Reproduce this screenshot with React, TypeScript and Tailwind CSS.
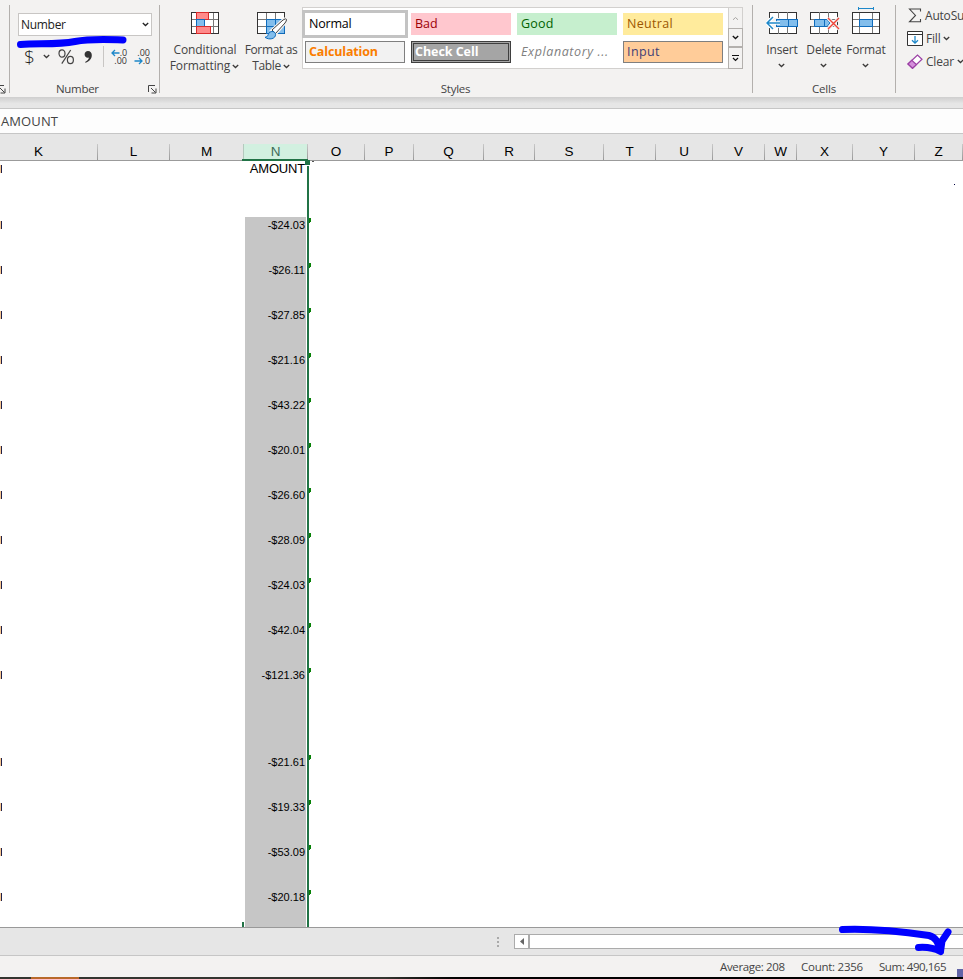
import React from "react";

const UI = "font-['Open_Sans','Noto_Sans',sans-serif]";
const ARIAL = "font-['Liberation_Sans',Arial,sans-serif]";

function Chevron({ className = "", color = "#3b3a39" }: { className?: string; color?: string }) {
  return (
    <svg width="7" height="5" viewBox="0 0 7 5" className={"shrink-0 " + className}>
      <path d="M0.8 1 L3.5 3.5 L6.2 1" fill="none" stroke={color} strokeWidth="1.3" />
    </svg>
  );
}

function Launcher() {
  return (
    <svg width="9" height="9" viewBox="0 0 9 9" className="shrink-0">
      <path d="M0.5 7 V0.5 H7 M3 3 L7.5 7.5 M8 3.5 V8 H3.5" fill="none" stroke="#444" />
    </svg>
  );
}

function Separator() {
  return <div className="mt-[5px] h-[88px] w-px shrink-0 bg-[#b3b0ad]" />;
}

function ArrowLeft() {
  return (
    <svg width="9" height="8" viewBox="0 0 9 8" className="shrink-0">
      <path d="M8.5 4 H1.2 M4 1 L1 4 L4 7" fill="none" stroke="#1e88c9" strokeWidth="1.3" />
    </svg>
  );
}

function ArrowRight() {
  return (
    <svg width="9" height="8" viewBox="0 0 9 8" className="shrink-0">
      <path d="M0.5 4 H7.8 M5 1 L8 4 L5 7" fill="none" stroke="#1e88c9" strokeWidth="1.3" />
    </svg>
  );
}

function NumberGroup() {
  return (
    <div className="flex h-full w-[149px] shrink-0 flex-col pt-[13px]">
      <div className="ml-2 flex h-[23px] w-[134px] items-center justify-between border border-[#c8c6c4] bg-white pl-[2px] pr-[2px]">
        <span className="pt-px text-[12px] leading-4 tracking-[-0.3px] text-[#222]">Number</span>
        <Chevron color="#222" />
      </div>
      <div className="mt-[10px] flex h-[21px] items-center">
        <span className="ml-[14px] w-[10px] text-[19px] font-light leading-5 text-[#222]">$</span>
        <Chevron className="ml-[9px]" />
        <svg width="17" height="16" viewBox="0 0 17 16" className="ml-[8px]">
          <g fill="none" stroke="#444" strokeWidth="1.2">
            <ellipse cx="4" cy="4.5" rx="3" ry="3.6" />
            <ellipse cx="12.4" cy="11" rx="3" ry="3.6" />
            <path d="M12.7 1 L3.8 14.6" />
          </g>
        </svg>
        <svg width="9" height="14" viewBox="0 0 9 14" className="ml-[9px]">
          <path d="M4 1 C6.4 1 7.8 2.7 7.8 5.1 C7.8 9 5.5 11.5 1.5 12.8 L1.1 12 C3.4 10.9 4.7 9.5 5 7.6 C2.6 8.4 0.6 6.8 0.6 4.5 C0.6 2.5 2.1 1 4 1 Z" fill="#333" />
        </svg>
        <div className="ml-[10px] h-[21px] w-px bg-[#c8c6c4]" />
        <div className="ml-[6px] flex w-[17px] flex-col items-end text-[9px] leading-[8px] text-[#333]">
          <div className="flex h-[8px] items-center"><ArrowLeft /><span className="tracking-[-0.1px]">.0</span></div>
          <div className="h-[8px]">.00</div>
        </div>
        <div className="ml-[6px] flex w-[17px] flex-col items-end text-[9px] leading-[8px] text-[#333]">
          <div className="h-[8px]">.00</div>
          <div className="flex h-[8px] items-center"><ArrowRight /><span className="tracking-[-0.1px]">.0</span></div>
        </div>
      </div>
      <div className="mt-[14px] flex h-4 items-center pl-[46px]">
        <span className="w-[83px] text-[11.5px] leading-4 tracking-[-0.3px]">Number</span>
        <div className="ml-[9px]"><Launcher /></div>
      </div>
    </div>
  );
}

function ConditionalIcon() {
  return (
    <svg width="28" height="22" viewBox="0 0 28 22">
      <rect x="0.5" y="0.5" width="27" height="21" fill="#fff" />
      <path d="M5.5 0 V22 M22.5 0 V22 M0 7.5 H28 M0 14.5 H28" stroke="#777" fill="none" />
      <rect x="0.5" y="0.5" width="27" height="21" fill="none" stroke="#333" />
      <rect x="5.5" y="0.5" width="12" height="7" fill="#ff8a8a" stroke="#d92c2c" />
      <rect x="5.5" y="7.5" width="8" height="7" fill="#83beec" stroke="#0f6cbd" />
      <rect x="5.5" y="14.5" width="14" height="7" fill="#ff8a8a" stroke="#d92c2c" />
    </svg>
  );
}

function TableIcon() {
  return (
    <svg width="31" height="28" viewBox="0 0 31 28">
      <rect x="0.5" y="0.5" width="27" height="21" fill="#fff" />
      <rect x="9.5" y="7.5" width="18" height="14" fill="#83beec" />
      <path d="M9.5 0 V8 M18.5 0 V8 M0 7.5 H9 M0 14.5 H9" stroke="#777" fill="none" />
      <rect x="0.5" y="0.5" width="27" height="21" fill="none" stroke="#333" />
      <path d="M9.5 22 V7.5 H28 M18.5 7.5 V21.5 M9.5 14.5 H27.5 M9.5 21.5 H27.5 V7.5" stroke="#0f6cbd" fill="none" />
      <path d="M14.5 18.5 L26 8 Q29 5.8 29.5 7.4 Q29.7 8.8 28 11 L18.5 22 Z" fill="#fff" stroke="#f3f2f1" strokeWidth="3" />
      <path d="M15 18 L26 8 Q29 6 29.5 7.4 Q29.7 8.8 28 11 L18.5 21.5 Z" fill="#fff" stroke="#444" />
      <path d="M8 25.3 C11 25 10.7 23 12 21 C14 18.5 18.4 19.3 18.6 22.3 C18.7 27 12 28.3 8 25.3 Z" fill="#83beec" stroke="#0f6cbd" />
    </svg>
  );
}

function StyleGallery() {
  return (
    <div className="mt-[7px] flex h-[62px] w-[441px] shrink-0">
      <div className="flex w-[426px] flex-col border border-r-0 border-[#d2d0ce] bg-white pt-[2px] text-[12.5px]">
        <div className="flex h-[28px] items-center">
          <div className="-ml-px flex h-[28px] w-[106px] items-center border-[3px] border-[#c3c3c3] bg-white pl-[4px] tracking-[-0.2px] text-black">Normal</div>
          <div className="ml-[3px] flex h-[22px] w-[100px] items-center bg-[#ffc7ce] pl-[4px] text-[#9c0006]">Bad</div>
          <div className="ml-[6px] flex h-[22px] w-[100px] items-center bg-[#c6efce] pl-[4px] tracking-[0.2px] text-[#006100]">Good</div>
          <div className="ml-[6px] flex h-[22px] w-[100px] items-center bg-[#ffeb9c] pl-[4px] tracking-[0.3px] text-[#9c5700]">Neutral</div>
        </div>
        <div className="mt-[3px] flex h-[22px] items-center pl-[2px]">
          <div className="flex h-[22px] w-[100px] items-center border border-[#7f7f7f] bg-[#f2f2f2] pl-[3px] font-bold tracking-[-0.15px] text-[#fa7d00]">Calculation</div>
          <div className="ml-[6px] flex h-[22px] w-[100px] border border-[#3f3f3f] bg-[#a5a5a5] p-px">
            <div className="flex flex-1 items-center border border-[#3f3f3f] pl-[1px] font-bold leading-4 tracking-[-0.05px] text-white">Check Cell</div>
          </div>
          <div className="ml-[6px] flex h-[22px] w-[100px] items-center whitespace-nowrap pl-[4px] italic tracking-[0.6px] text-[#7f7f7f]">Explanatory ...</div>
          <div className="ml-[6px] flex h-[22px] w-[100px] items-center border border-[#7f7f7f] bg-[#ffcc99] pl-[3px] tracking-[0.4px] text-[#3f3f76]">Input</div>
        </div>
      </div>
      <div className="flex w-[15px] flex-col">
        <div className="flex h-[21px] items-center justify-center border border-b-0 border-[#d2d0ce]">
          <svg width="7" height="5" viewBox="0 0 7 5"><path d="M1 3.8 L3.5 1.5 L6 3.8" fill="none" stroke="#a8a6a4" /></svg>
        </div>
        <div className="flex h-[19px] items-center justify-center border border-[#b3b0ad]"><Chevron color="#111" /></div>
        <div className="flex h-[22px] items-center justify-center border border-[#b3b0ad]">
          <svg width="7" height="8" viewBox="0 0 7 8"><path d="M0 1.5 H7 M1 4 L3.5 6.5 L6 4" fill="none" stroke="#111" strokeWidth="1.2" /></svg>
        </div>
      </div>
    </div>
  );
}

function StylesGroup() {
  return (
    <div className="flex h-full w-[592px] shrink-0 flex-col">
      <div className="flex h-[81px]">
        <div className="flex w-[83px] flex-col items-center pl-[7px] pt-[12px]">
          <ConditionalIcon />
          <span className="mt-[8px] text-[12px] leading-4 tracking-[-0.1px]">Conditional</span>
          <span className="-ml-px flex items-center gap-[2px] whitespace-nowrap text-[12px] leading-4 tracking-[-0.1px]">Formatting <Chevron /></span>
        </div>
        <div className="flex w-[59px] flex-col items-center pr-[3px] pt-[12px]">
          <div className="ml-[2px] h-[22px]"><TableIcon /></div>
          <span className="mt-[8px] whitespace-nowrap text-[12px] leading-4 tracking-[-0.35px]">Format as</span>
          <span className="flex items-center gap-[2px] text-[12px] leading-4 tracking-[-0.35px]">Table <Chevron /></span>
        </div>
        <StyleGallery />
      </div>
      <div className="pr-px text-center text-[11.5px] leading-4 tracking-[-0.25px]">Styles</div>
    </div>
  );
}

function InsertIcon() {
  return (
    <svg width="33" height="22" viewBox="0 0 33 22">
      <rect x="3.5" y="0.5" width="27" height="21" fill="#fff" stroke="#333" />
      <path d="M12.5 0 V22 M21.5 0 V22" stroke="#777" />
      <rect x="0" y="6" width="14" height="10" fill="#f3f2f1" />
      <rect x="10.5" y="7.5" width="21" height="7" fill="#83beec" stroke="#0f6cbd" />
      <path d="M22.5 7 V15" stroke="#0f6cbd" />
      <path d="M14 11 H1.5 M7 5 L1 11 L7 17" fill="none" stroke="#fff" strokeWidth="3.5" />
      <path d="M14 11 H1.5 M7 5 L1 11 L7 17" fill="none" stroke="#1e88c9" strokeWidth="1.5" />
    </svg>
  );
}

function DeleteIcon() {
  return (
    <svg width="30" height="22" viewBox="0 0 30 22">
      <rect x="0.5" y="0.5" width="27" height="21" fill="#fff" stroke="#333" />
      <path d="M9.5 0 V7 M18.5 0 V7 M9.5 15 V22 M18.5 15 V22 M1 7.5 H27 M1 14.5 H27" stroke="#777" />
      <rect x="0" y="8" width="4" height="6" fill="#f3f2f1" />
      <path d="M4.5 7.5 H17 L20 11 L17 14.5 H4.5 Z" fill="#83beec" stroke="#0f6cbd" />
      <path d="M14.5 7 V15" stroke="#0f6cbd" />
      <path d="M18 6 L29 17 M29 6 L18 17" stroke="#f3f2f1" strokeWidth="3.5" />
      <path d="M18 6 L29 17 M29 6 L18 17" stroke="#f04438" strokeWidth="1.4" />
    </svg>
  );
}

function FormatIcon() {
  return (
    <svg width="28" height="27" viewBox="0 0 28 27">
      <path d="M6.5 0 V3 M21.5 0 V3 M6.5 1.5 H21.5" stroke="#1e88c9" fill="none" />
      <rect x="0.5" y="5.5" width="27" height="21" fill="#fff" />
      <path d="M7.5 5 V27 M20.5 5 V27 M0 12.5 H28 M0 19.5 H28" stroke="#777" />
      <rect x="0.5" y="5.5" width="27" height="21" fill="none" stroke="#333" />
      <rect x="7.5" y="12.5" width="13" height="7" fill="#83beec" stroke="#0f6cbd" />
    </svg>
  );
}

function BigButton({ label, children }: { label: string; children: React.ReactNode }) {
  return (
    <div className="flex w-[42px] flex-col items-center">
      <div className="flex h-[34px] items-end justify-center pl-[2px]">{children}</div>
      <span className="mt-[8px] pl-[2px] text-[12px] leading-4 tracking-[-0.15px]">{label}</span>
      <Chevron className="mt-[5px]" />
    </div>
  );
}

function CellsGroup() {
  return (
    <div className="flex h-full w-[142px] shrink-0 flex-col">
      <div className="flex h-[81px] pl-[7px]">
        <BigButton label="Insert"><InsertIcon /></BigButton>
        <BigButton label="Delete"><div className="ml-[1px]"><DeleteIcon /></div></BigButton>
        <BigButton label="Format"><FormatIcon /></BigButton>
      </div>
      <div className="text-center text-[11.5px] leading-4 tracking-[-0.2px]">Cells</div>
    </div>
  );
}

function EditingGroup() {
  return (
    <div className="flex h-full min-w-0 flex-1 flex-col overflow-hidden whitespace-nowrap pl-[11px] pt-[4px] text-[12px] tracking-[-0.2px]">
      <div className="flex h-[23px] items-center">
        <svg width="14" height="15" viewBox="0 0 14 15" className="ml-[1px] shrink-0"><path d="M12.5 3.5 V1 H1.5 L7.5 7.5 L1.5 13.8 H12.5 V11" fill="none" stroke="#444" strokeWidth="1.1" /></svg>
        <span className="ml-[3px]">AutoSum</span>
      </div>
      <div className="flex h-[23px] items-center">
        <svg width="16" height="15" viewBox="0 0 16 15" className="shrink-0"><path d="M0.5 0.5 H15.5 V14.5 H0.5 Z M0.5 3.5 H15.5" fill="#fff" stroke="#333" /><path d="M8 5 V12 M5 9.2 L8 12.2 L11 9.2" fill="none" stroke="#1e88c9" strokeWidth="1.3" /></svg>
        <span className="ml-[3px]">Fill</span><Chevron className="ml-[3px]" />
      </div>
      <div className="flex h-[23px] items-center">
        <svg width="16" height="15" viewBox="0 0 16 15" className="shrink-0"><path d="M1 10 L10.5 1 L15 5.3 L5.5 14.3 Z" fill="#fff" stroke="#9b3fa5" strokeWidth="1.2" /><path d="M1 10 L4.8 6.4 L9.4 10.6 L5.5 14.3 Z" fill="#d48fdb" stroke="#9b3fa5" strokeWidth="1.2" /></svg>
        <span className="ml-[3px]">Clear</span><Chevron className="ml-[3px]" />
      </div>
    </div>
  );
}

function Ribbon() {
  return (
    <div className="flex h-[97px] shrink-0 bg-[#f3f2f1] text-[#444]">
      <div className="flex w-[9px] shrink-0 items-end overflow-hidden pb-[3px]">
        <div className="-ml-[3px]"><Launcher /></div>
      </div>
      <Separator />
      <NumberGroup />
      <Separator />
      <StylesGroup />
      <Separator />
      <CellsGroup />
      <Separator />
      <EditingGroup />
    </div>
  );
}

const headers: [string, string][] = [
  ["K", "w-[98px]"], ["L", "w-[72px]"], ["M", "w-[74px]"], ["N", "w-[64px]"], ["O", "w-[57px]"],
  ["P", "w-[49px]"], ["Q", "w-[70px]"], ["R", "w-[51px]"], ["S", "w-[69px]"], ["T", "w-[52px]"],
  ["U", "w-[57px]"], ["V", "w-[52px]"], ["W", "w-[32px]"], ["X", "w-[56px]"], ["Y", "w-[62px]"], ["Z", "w-[48px]"],
];

function ColumnHeaders() {
  return (
    <div className="flex h-[27px] shrink-0 items-end overflow-hidden border-b border-[#9b9b9b] bg-[#e6e6e6]">
      {headers.map(([name, width]) => (
        <div
          key={name}
          className={
            "flex h-[16px] shrink-0 items-center justify-center text-[13.5px] leading-4 " + ARIAL + " " + width + " " +
            (name === "N" ? "bg-[#d2f0e0] text-[#3d6b58]" : "text-black")
          }
        >
          <span className={"flex-1 text-center " + (name === "K" ? "pr-[20px]" : "")}>{name}</span>
          <span className={"h-full w-px " + (name === "M" ? "bg-[#b5c9be]" : "bg-gradient-to-b from-[#c8c8c8] to-[#999]")} />
        </div>
      ))}
    </div>
  );
}

const rows: [string, string][] = [
  ["-$24.03", "h-[45px]"], ["-$26.11", "h-[45px]"], ["-$27.85", "h-[45px]"], ["-$21.16", "h-[45px]"],
  ["-$43.22", "h-[45px]"], ["-$20.01", "h-[45px]"], ["-$26.60", "h-[45px]"], ["-$28.09", "h-[45px]"],
  ["-$24.03", "h-[45px]"], ["-$42.04", "h-[45px]"], ["-$121.36", "h-[87px]"], ["-$21.61", "h-[45px]"],
  ["-$19.33", "h-[45px]"], ["-$53.09", "h-[45px]"], ["-$20.18", "h-[38px]"],
];

function Stub() {
  return (
    <div className="mt-[4px] flex h-[8px] w-[2px]">
      <div className="w-px bg-[#f6c690]" />
      <div className="w-px bg-[#202048]" />
    </div>
  );
}

function Sheet() {
  return (
    <div className={"relative flex h-[766px] shrink-0 flex-col overflow-hidden bg-white text-black " + ARIAL}>
      <div className="flex h-[56px] shrink-0">
        <div className="w-[245px]"><Stub /></div>
        <div className="w-[60px] text-right text-[13px] leading-4 tracking-[-0.2px]">AMOUNT</div>
        <div className="ml-[2px] mt-[5px] h-[51px] w-[2px] bg-[#217346]" />
        <div className="ml-[645px] mt-[23px] size-px bg-[#000040]" />
      </div>
      {rows.map(([value, height], i) => (
        <div key={i} className={"flex shrink-0 " + height}>
          <div className="w-[245px]"><Stub /></div>
          <div className="w-[61px] bg-[#c6c6c6] pr-[1px] text-right text-[11px] leading-[17px]">{value}</div>
          <div className="ml-px w-[2px] bg-[#217346]" />
          <svg width="2" height="5" viewBox="0 0 2 5" className="mt-px"><path d="M0 0 H2 V4 H1 V5 H0 Z" fill="#078207" /></svg>
        </div>
      ))}
      <div className="absolute bottom-0 left-[242px] h-[5px] w-[2px] bg-[#217346]" />
    </div>
  );
}

function ScrollRow() {
  return (
    <div className="flex h-[29px] shrink-0 items-center border-y border-t-[#999] border-b-[#c6c6c6] bg-[#e6e6e6]">
      <div className="ml-[497px] flex flex-col gap-[2px]">
        <i className="size-[2px] bg-[#aaa]" /><i className="size-[2px] bg-[#aaa]" /><i className="size-[2px] bg-[#aaa]" />
      </div>
      <div className="ml-[15px] flex h-[15px] flex-1 border border-r-0 border-[#ababab] bg-white">
        <div className="flex w-[13px] items-center justify-center"><svg width="4" height="7" viewBox="0 0 4 7"><path d="M4 0 V7 L0 3.5 Z" fill="#666" /></svg></div>
        <div className="w-[2px] bg-[#ababab]" />
      </div>
    </div>
  );
}

export default function App() {
  return (
    <div className={"relative flex h-[979px] w-[963px] flex-col overflow-hidden bg-[#e6e6e6] " + UI}>
      <Ribbon />
      <div className="h-[11px] shrink-0 bg-gradient-to-b from-[#cecece] to-[#e6e6e6] to-60%" />
      <div className="flex h-[26px] shrink-0 items-center border-y border-[#c6c6c6] bg-[#fdfdfd] pl-px pt-[2px] text-[13px] tracking-[0.1px] text-[#444]">AMOUNT</div>
      <ColumnHeaders />
      <Sheet />
      <ScrollRow />
      <div className="flex h-[21px] shrink-0 items-center bg-[#f3f2f1] text-[11.5px] tracking-[-0.35px] text-[#444]">
        <span className="ml-[720px] w-[81px] whitespace-nowrap">Average: 208</span>
        <span className="w-[78px] whitespace-nowrap tracking-[-0.25px]">Count: 2356</span>
        <span className="flex-1 whitespace-nowrap tracking-[-0.45px]">Sum: 490,165</span>
        <span className="mt-auto h-[8px] w-[6px] bg-[#6264a7]" />
      </div>
      <div className="flex h-[2px] shrink-0 bg-gradient-to-r from-[#333530] from-40% to-black to-50%">
        <div className="ml-[31px] w-[48px] bg-[#b8692a]" />
      </div>

      <div className="absolute left-[242px] top-[159px] h-[2px] w-[66px] bg-[#217346]" />
      <div className="absolute left-[305px] top-[160px] h-[5px] w-[5px] bg-[#217346]" />
      <div className="absolute left-[312px] top-[161px] h-px w-[2px] bg-[#555]" />
      <svg className="absolute left-0 top-0" width="963" height="979" viewBox="0 0 963 979" fill="none" stroke="#0000ff" strokeWidth="7" strokeLinecap="round" strokeLinejoin="round">
        <path d="M20.5 44.5 C38 43 57 45 75 41.5 C91 38.5 107 39.5 123 40" />
        <path d="M842.5 929.5 C876 928 905 932 929 935.5 C935 937 938 941 940.5 951.5 M918.5 947.5 C926 947 934 948 940.5 951.5 L942 941 L948 932" />
      </svg>
    </div>
  );
}
